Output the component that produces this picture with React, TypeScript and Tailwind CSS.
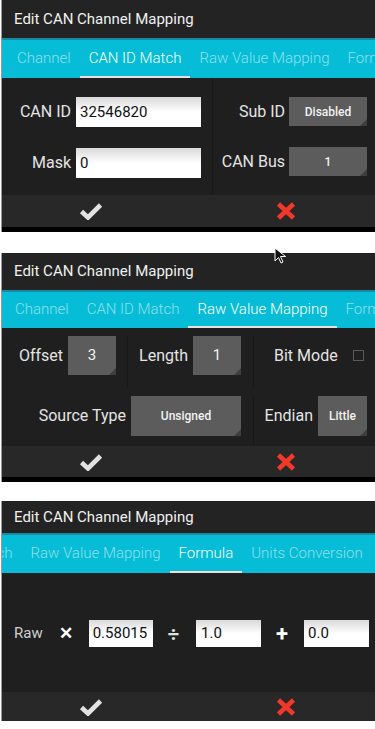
import React from 'react';

const font = { fontFamily: 'Roboto, "Noto Sans", sans-serif' };

const Check = () => (
  <svg width="24" height="18" viewBox="0 0 24 18">
    <path d="M2.5 9.5 L9 15.5 L21.5 3" fill="none" stroke="#e2e2e2" strokeWidth="4.6" strokeLinejoin="miter" />
  </svg>
);

const Cross = () => (
  <svg width="22" height="20" viewBox="0 0 22 20">
    <path d="M3.5 3 L18.5 17 M18.5 3 L3.5 17" fill="none" stroke="#f0392b" strokeWidth="4.6" />
  </svg>
);

const GrayButton = ({ label, className, bold }: { label: string; className: string; bold?: boolean }) => (
  <div className={`relative flex items-center justify-center bg-[#5c5c5c] text-[#f2f2f2] ${bold ? 'text-[12px] font-medium' : 'text-[15px]'} ${className}`}>
    {label}
    <div className="absolute bottom-0 right-0 h-0 w-0 border-b-[7px] border-l-[7px] border-b-[#3e3e3e] border-l-transparent" />
  </div>
);

const TextInput = ({ value, className }: { value: string; className: string }) => (
  <div className={`flex items-center bg-gradient-to-b from-[#d9d9d9] via-white to-white pl-[4px] text-[15px] text-[#111] ${className}`}>
    {value}
  </div>
);

const tabs = ['Channel', 'CAN ID Match', 'Raw Value Mapping', 'Formula', 'Units Conversion'];

const TabBar = ({ active, offset, height }: { active: string; offset: string; height: string }) => (
  <div className={`flex overflow-hidden border-t-2 border-[#1a8aa3] bg-[#06bcd6] ${height}`}>
    <div className={`flex shrink-0 ${offset}`}>
      {tabs.map((t) => (
        <div
          key={t}
          className={`flex shrink-0 items-center whitespace-nowrap border-b-2 px-[9px] text-[15px] font-light ${
            t === active ? 'border-[#e8e0dc] text-white' : 'border-transparent text-[#8fe0ec]'
          }`}
        >
          {t}
        </div>
      ))}
    </div>
  </div>
);

const Footer = ({ height, strip }: { height: string; strip?: boolean }) => (
  <>
    <div className={`flex bg-[#282828] ${height}`}>
      <div className="flex flex-1 items-center justify-center pr-[8px]">
        <Check />
      </div>
      <div className="flex flex-1 items-center justify-center pl-[10px]">
        <Cross />
      </div>
    </div>
    {strip && <div className="h-[5px] bg-black" />}
  </>
);

const Title = ({ height }: { height: string }) => (
  <div className={`flex items-center bg-[#232323] pl-[12px] text-[15px] text-[#f0f0f0] ${height}`}>
    Edit CAN Channel Mapping
  </div>
);

export default function App() {
  return (
    <div className="relative h-[729px] w-[375px] overflow-hidden bg-white" style={font}>
      {/* Panel 1 */}
      <div className="ml-[1px] border-l border-[#9a9a9a]">
        <Title height="h-[38px]" />
        <TabBar active="CAN ID Match" offset="ml-[6px]" height="h-[40px]" />
        <div className="flex h-[117px] bg-[#1f1f1f] text-[16px] text-[#e4e4e4]">
          <div className="flex w-[211px] flex-col gap-[21px] border-r border-[#181818] pt-[19px]">
            <div className="flex h-[30px] items-center">
              <span className="w-[72px] pr-[3px] text-right">CAN ID</span>
              <TextInput value="32546820" className="ml-[2px] h-[30px] w-[125px]" />
            </div>
            <div className="flex h-[30px] items-center">
              <span className="w-[72px] pr-[3px] text-right">Mask</span>
              <TextInput value="0" className="ml-[2px] h-[30px] w-[125px]" />
            </div>
          </div>
          <div className="flex flex-1 flex-col gap-[21px] pt-[19px]">
            <div className="flex h-[29px] items-center">
              <span className="w-[76px] pr-[4px] text-right">Sub ID</span>
              <GrayButton label="Disabled" bold className="h-[29px] w-[78px]" />
            </div>
            <div className="flex h-[29px] items-center">
              <span className="w-[76px] pr-[4px] text-right">CAN Bus</span>
              <GrayButton label="1" bold className="h-[29px] w-[78px]" />
            </div>
          </div>
        </div>
        <Footer height="h-[32px]" strip />
      </div>

      <div className="h-[21px]" />

      {/* Panel 2 */}
      <div className="ml-[1px] border-l border-[#9a9a9a]">
        <Title height="h-[37px]" />
        <TabBar active="Raw Value Mapping" offset="ml-[4px]" height="h-[38px]" />
        <div className="flex h-[118px] flex-col bg-[#1f1f1f] text-[16px] text-[#e4e4e4]">
          <div className="flex h-[60px] pt-[8px]">
            <div className="flex w-[126px] items-start border-r border-[#181818]">
              <span className="flex h-[39px] w-[66px] items-center justify-end pr-[5px]">Offset</span>
              <GrayButton label="3" className="h-[39px] w-[48px]" />
            </div>
            <div className="flex w-[126px] items-start border-r border-[#181818]">
              <span className="flex h-[39px] w-[65px] items-center justify-end pr-[5px]">Length</span>
              <GrayButton label="1" className="h-[39px] w-[48px]" />
            </div>
            <div className="flex flex-1 items-start">
              <span className="flex h-[39px] items-center pl-[20px]">Bit Mode</span>
              <span className="ml-[15px] mt-[14px] h-[11px] w-[11px] border border-[#5a5a5a]" />
            </div>
          </div>
          <div className="flex h-[58px] pt-[8px]">
            <div className="flex w-[252px] items-start border-r border-[#181818]">
              <span className="flex h-[40px] w-[129px] items-center justify-end pr-[5px]">Source Type</span>
              <GrayButton label="Unsigned" bold className="h-[40px] w-[110px]" />
            </div>
            <div className="flex flex-1 items-start">
              <span className="flex h-[40px] w-[64px] items-center justify-end pr-[5px]">Endian</span>
              <GrayButton label="Little" bold className="h-[40px] w-[49px]" />
            </div>
          </div>
        </div>
        <Footer height="h-[31px]" strip />
      </div>

      <div className="h-[19px]" />

      {/* Panel 3 */}
      <div className="ml-[1px] border-l border-[#9a9a9a]">
        <Title height="h-[32px]" />
        <TabBar active="Formula" offset="ml-[-163px]" height="h-[40px]" />
        <div className="flex h-[119px] items-start bg-[#1f1f1f] pt-[47px]">
          <div className="flex h-[27px] items-center">
            <span className="ml-[12px] text-[15px] text-[#d0d0d0]">Raw</span>
            <span className="ml-[16px] text-[17px] font-bold leading-none text-white">✕</span>
            <TextInput value="0.58015" className="ml-[16px] h-[27px] w-[64px] pl-[3px]" />
            <span className="ml-[15px] text-[20px] font-bold leading-none text-[#e0e0e0]">÷</span>
            <TextInput value="1.0" className="ml-[17px] h-[27px] w-[65px] pl-[5px]" />
            <span className="ml-[15px] text-[22px] font-bold leading-none text-white">+</span>
            <TextInput value="0.0" className="ml-[16px] h-[27px] w-[65px] pl-[3px]" />
          </div>
        </div>
        <Footer height="h-[29px]" />
      </div>

      {/* mouse cursor */}
      <svg className="absolute left-[274px] top-[247px]" width="14" height="18" viewBox="0 0 14 18">
        <path d="M1 1 L1 14 L4.5 10.5 L7 16 L9 15 L6.5 9.5 L11.5 9.5 Z" fill="#111" stroke="#fff" strokeWidth="1" />
      </svg>
    </div>
  );
}
